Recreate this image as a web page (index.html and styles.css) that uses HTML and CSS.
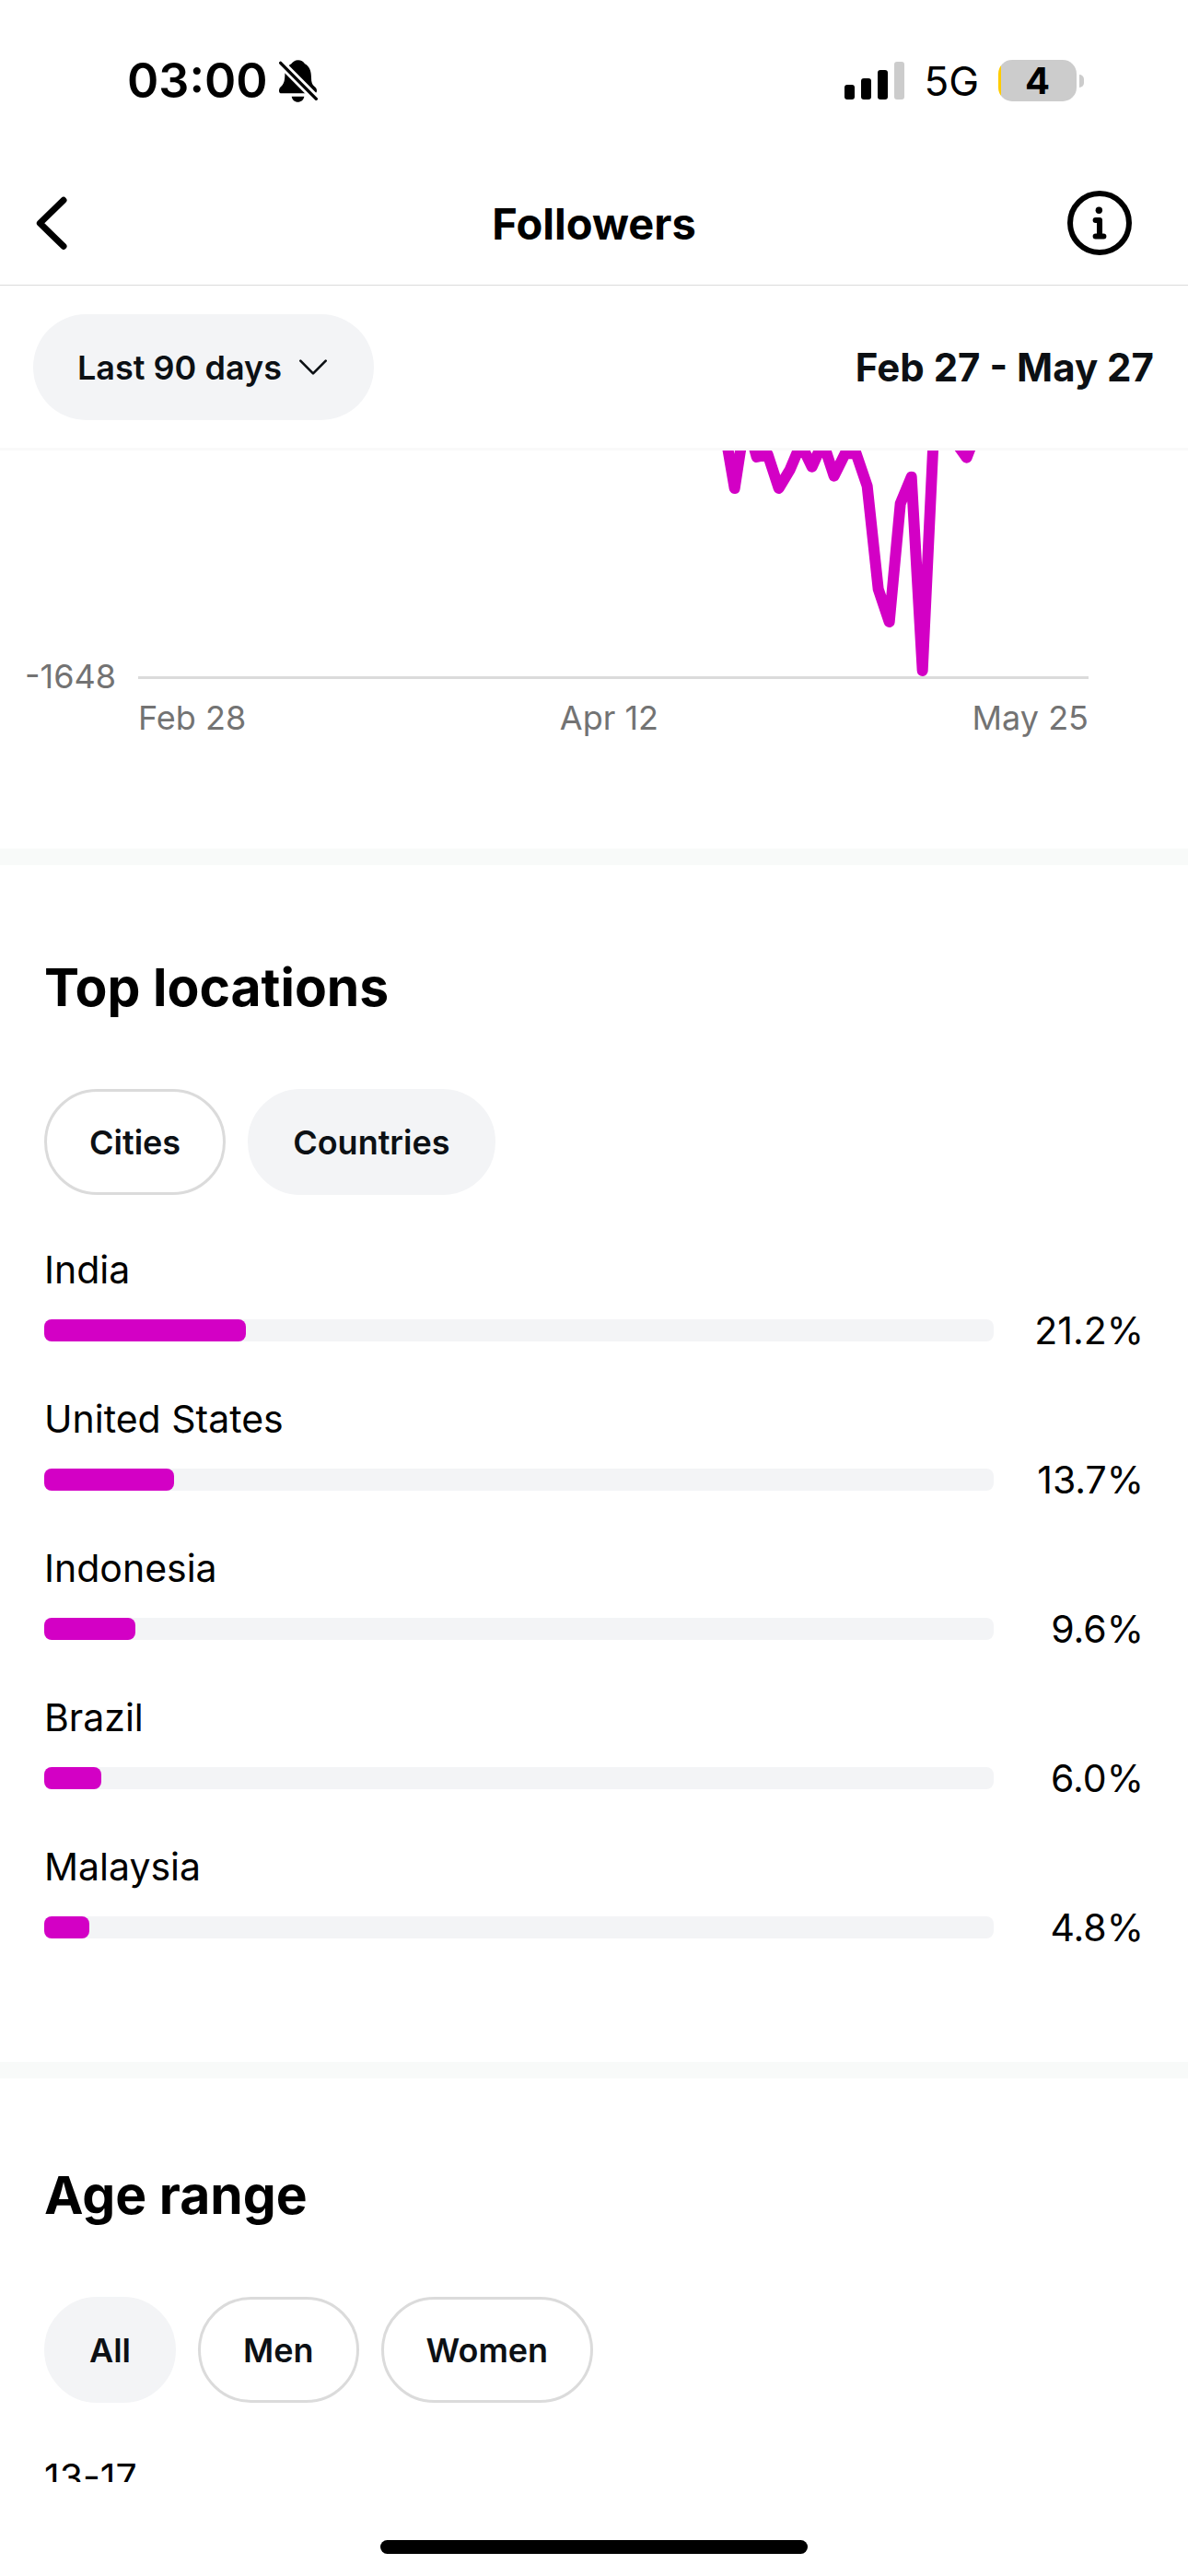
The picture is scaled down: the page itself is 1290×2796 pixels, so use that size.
FILE: index.html
```html
<!DOCTYPE html>
<html lang="en">
<head>
    <meta charset="UTF-8">
    <meta name="viewport" content="width=device-width, initial-scale=1.0">
    <title>Followers</title>
    <link rel="stylesheet" href="styles.css">
</head>
<body>
    <div class="status-bar">
        <div class="status-left">
            <span class="time">03:00</span>
            <svg class="bell" viewBox="0 0 126 136" aria-hidden="true">
                <path d="M62 0C52 0 45 5 40 12C26 20 19 32 19 50C18 74 13 80 4 88C1 91 0 96 0 100C0 105 3 108 8 108H116C120 108 123 104 123 99C123 92 120 89 115 85C108 79 105 72 105 58C105 34 99 20 84 12C79 4 72 0 62 0Z" />
                <path d="M41 118H82C80 129 72 136 61 136C51 136 43 129 41 118Z" />
                <path class="bell-gap" d="M-8 -4L134 139" />
                <path class="bell-slash" d="M5 9L121 126" />
            </svg>
        </div>
        <div class="status-right">
            <svg class="signal" viewBox="0 0 65 41" aria-hidden="true">
                <rect x="0" y="25" width="11" height="16" rx="3" />
                <rect x="18" y="18" width="11" height="23" rx="3" />
                <rect x="36" y="9" width="11" height="32" rx="3" />
                <rect class="signal-off" x="54" y="0" width="11" height="41" rx="3" />
            </svg>
            <span class="network">5G</span>
            <div class="battery">
                <span class="battery-level">4</span>
            </div>
        </div>
    </div>

    <header class="top-nav">
        <button class="icon-button" aria-label="Back">
            <svg class="back-icon" viewBox="0 0 102 174">
                <path d="M90 13L13 88L90 163" />
            </svg>
        </button>
        <h1>Followers</h1>
        <button class="icon-button info-button" aria-label="Info">
            <svg class="info-icon" viewBox="0 0 208 208">
                <circle class="info-ring" cx="104" cy="104" r="95" />
                <circle cx="102" cy="63" r="11" />
                <path d="M91 95H104V147M91 147H117" />
            </svg>
        </button>
    </header>

    <div class="filter-bar">
        <div class="period">
            <select class="period-select" aria-label="Period">
                <option>Last 7 days</option>
                <option>Last 30 days</option>
                <option selected>Last 90 days</option>
            </select>
            <svg class="period-arrow" viewBox="0 0 90 51" aria-hidden="true">
                <path d="M4 5L45 46L86 5" />
            </svg>
        </div>
        <p class="date-range">Feb 27 - May 27</p>
    </div>

    <main>
        <section class="chart">
            <span class="y-label">-1648</span>
            <svg class="plot" viewBox="0 0 3096 735" role="img" aria-label="Followers over time">
                <polyline points="1907,-87 1943,123 1979,-110 2015,21 2051,13 2087,123 2123,63 2159,-22 2195,53 2231,-27 2267,83 2303,10 2339,10 2375,116 2411,451 2447,558 2483,173 2519,86 2555,717 2591,-42 2627,-90 2663,-27 2699,23 2735,-71" />
            </svg>
            <div class="x-labels">
                <span>Feb 28</span>
                <span>Apr 12</span>
                <span>May 25</span>
            </div>
        </section>

        <section class="panel locations">
            <h2>Top locations</h2>
            <div class="tabs">
                <button class="tab">Cities</button>
                <button class="tab active">Countries</button>
            </div>
            <ul class="bars">
                <li>
                    <span class="name">India</span>
                    <div class="track"><div class="fill" style="width: 21.2%"></div></div>
                    <span class="value">21.2%</span>
                </li>
                <li>
                    <span class="name">United States</span>
                    <div class="track"><div class="fill" style="width: 13.7%"></div></div>
                    <span class="value">13.7%</span>
                </li>
                <li>
                    <span class="name">Indonesia</span>
                    <div class="track"><div class="fill" style="width: 9.6%"></div></div>
                    <span class="value">9.6%</span>
                </li>
                <li>
                    <span class="name">Brazil</span>
                    <div class="track"><div class="fill" style="width: 6.0%"></div></div>
                    <span class="value">6.0%</span>
                </li>
                <li>
                    <span class="name">Malaysia</span>
                    <div class="track"><div class="fill" style="width: 4.8%"></div></div>
                    <span class="value">4.8%</span>
                </li>
            </ul>
        </section>

        <section class="panel ages">
            <h2>Age range</h2>
            <div class="tabs">
                <button class="tab active">All</button>
                <button class="tab">Men</button>
                <button class="tab">Women</button>
            </div>
            <ul class="bars">
                <li><span class="name">13-17</span></li>
            </ul>
        </section>
    </main>

    <footer>
        <div class="home-indicator"></div>
    </footer>
</body>
</html>
```

FILE: styles.css
```css
* {
    box-sizing: border-box;
}

body {
    font-family: Inter, 'Liberation Sans', sans-serif;
    margin: 0;
    height: 100vh;
    display: flex;
    flex-direction: column;
    background: #fff;
    color: #000;
}

h1, h2, p, ul {
    margin: 0;
    padding: 0;
}

button, select {
    font-family: inherit;
    border: none;
    cursor: pointer;
}

svg {
    display: block;
}

/* Status bar */
.status-bar {
    flex: none;
    height: 175px;
    padding: 0 113px 0 138px;
    display: flex;
    align-items: center;
    justify-content: space-between;
}

.status-left, .status-right {
    display: flex;
    align-items: center;
}

.status-left {
    gap: 12px;
}

.time {
    font-size: 52px;
    font-weight: 600;
}

.bell {
    width: 42px;
    height: 46px;
}

.bell-gap, .bell-slash {
    stroke: #000;
    stroke-width: 10;
    stroke-linecap: round;
}

.bell-gap {
    stroke: #fff;
    stroke-width: 27;
}

.signal {
    width: 65px;
    height: 41px;
}

.signal-off {
    fill: #ccc;
}

.network {
    margin: 0 21px;
    font-size: 44px;
}

.battery {
    position: relative;
    width: 85px;
    height: 45px;
    margin-right: 8px;
    border-radius: 15px;
    background: linear-gradient(to right, #ffcc00 3px, #ccc 3px);
    display: flex;
    align-items: center;
    justify-content: center;
}

.battery::after {
    content: "";
    position: absolute;
    right: -8px;
    width: 5px;
    height: 14px;
    border-radius: 0 5px 5px 0;
    background: #ccc;
}

.battery-level {
    font-size: 40px;
    font-weight: 700;
}

/* Navigation */
.top-nav {
    flex: none;
    height: 135px;
    padding: 0 61px 0 39px;
    display: grid;
    grid-template-columns: 1fr auto 1fr;
    align-items: center;
    border-bottom: 1px solid #dbdbdb;
}

.top-nav h1 {
    font-size: 47px;
    font-weight: 700;
    padding-left: 22px;
}

.icon-button {
    padding: 0;
    background: none;
    justify-self: start;
}

.info-button {
    justify-self: end;
}

.back-icon, .info-icon {
    fill: none;
    stroke: #000;
    stroke-linecap: round;
    stroke-linejoin: round;
}

.back-icon {
    width: 34px;
    height: 58px;
    stroke-width: 21;
}

.info-icon {
    width: 70px;
    height: 70px;
    fill: #000;
    stroke-width: 18;
}

.info-icon circle {
    stroke: none;
}

.info-icon path, .info-icon .info-ring {
    fill: none;
    stroke: #000;
}

/* Period filter */
.filter-bar {
    flex: none;
    padding: 31px 37px 30px 36px;
    display: flex;
    align-items: center;
    justify-content: space-between;
    border-bottom: 3px solid #f9f9f9;
    color: #0c1014;
}

.period {
    position: relative;
}

.period-select {
    display: block;
    height: 115px;
    padding: 0 100px 0 48px;
    border-radius: 58px;
    appearance: none;
    background: #f3f4f6;
    color: #0c1014;
    font-size: 36px;
    font-weight: 600;
}

.period-arrow {
    position: absolute;
    right: 51px;
    top: 49px;
    width: 30px;
    height: 17px;
    fill: none;
    stroke: #0c1014;
    stroke-width: 8;
    stroke-linecap: round;
    stroke-linejoin: round;
    pointer-events: none;
}

.date-range {
    font-size: 42px;
    font-weight: 700;
}

/* Scrolling content */
main {
    flex: 1;
    min-height: 0;
    overflow: hidden;
}

.chart {
    display: grid;
    grid-template-columns: 150px 1fr;
    padding: 0 108px 121px 0;
    color: #737373;
    font-size: 36px;
    line-height: 42px;
}

.y-label {
    align-self: end;
    margin-bottom: -18px;
    padding-right: 24px;
    text-align: right;
}

.plot {
    width: 100%;
    box-sizing: content-box;
    border-bottom: 3px solid #dbdbdb;
    fill: none;
    stroke: #d300c5;
    stroke-width: 36;
    stroke-linecap: round;
    stroke-linejoin: round;
}

.x-labels {
    grid-column: 2;
    margin-top: 21px;
    display: flex;
    justify-content: space-between;
}

.panel {
    padding: 97px 48px 122px;
    border-top: 18px solid #f8faf9;
}

.locations {
    padding-top: 103px;
}

.panel h2 {
    font-size: 57px;
    font-weight: 700;
    line-height: 60px;
}

.tabs {
    margin: 80px 0 57px;
    display: flex;
    gap: 24px;
}

.tab {
    height: 115px;
    padding: 0 46px;
    border: 3px solid #dbdbdb;
    border-radius: 58px;
    background: #fff;
    color: #0c1014;
    font-size: 36px;
    font-weight: 600;
}

.tab.active {
    border-color: #f3f4f6;
    background: #f3f4f6;
}

.bars {
    list-style: none;
    font-size: 41px;
    line-height: 48px;
}

.bars li {
    display: grid;
    grid-template-columns: 1fr 163px;
    row-gap: 18px;
    align-items: center;
    margin-bottom: 48px;
}

.bars li:last-child {
    margin-bottom: 0;
}

.name {
    grid-column: 1 / -1;
}

.track {
    height: 24px;
    border-radius: 8px;
    background: #f3f4f6;
}

.fill {
    height: 100%;
    border-radius: 8px;
    background: #d300c5;
}

.value {
    text-align: right;
}

footer {
    flex: none;
    height: 102px;
    padding-bottom: 24px;
    display: flex;
    align-items: flex-end;
    justify-content: center;
}

.home-indicator {
    width: 36%;
    height: 15px;
    border-radius: 8px;
    background: #000;
}
```
